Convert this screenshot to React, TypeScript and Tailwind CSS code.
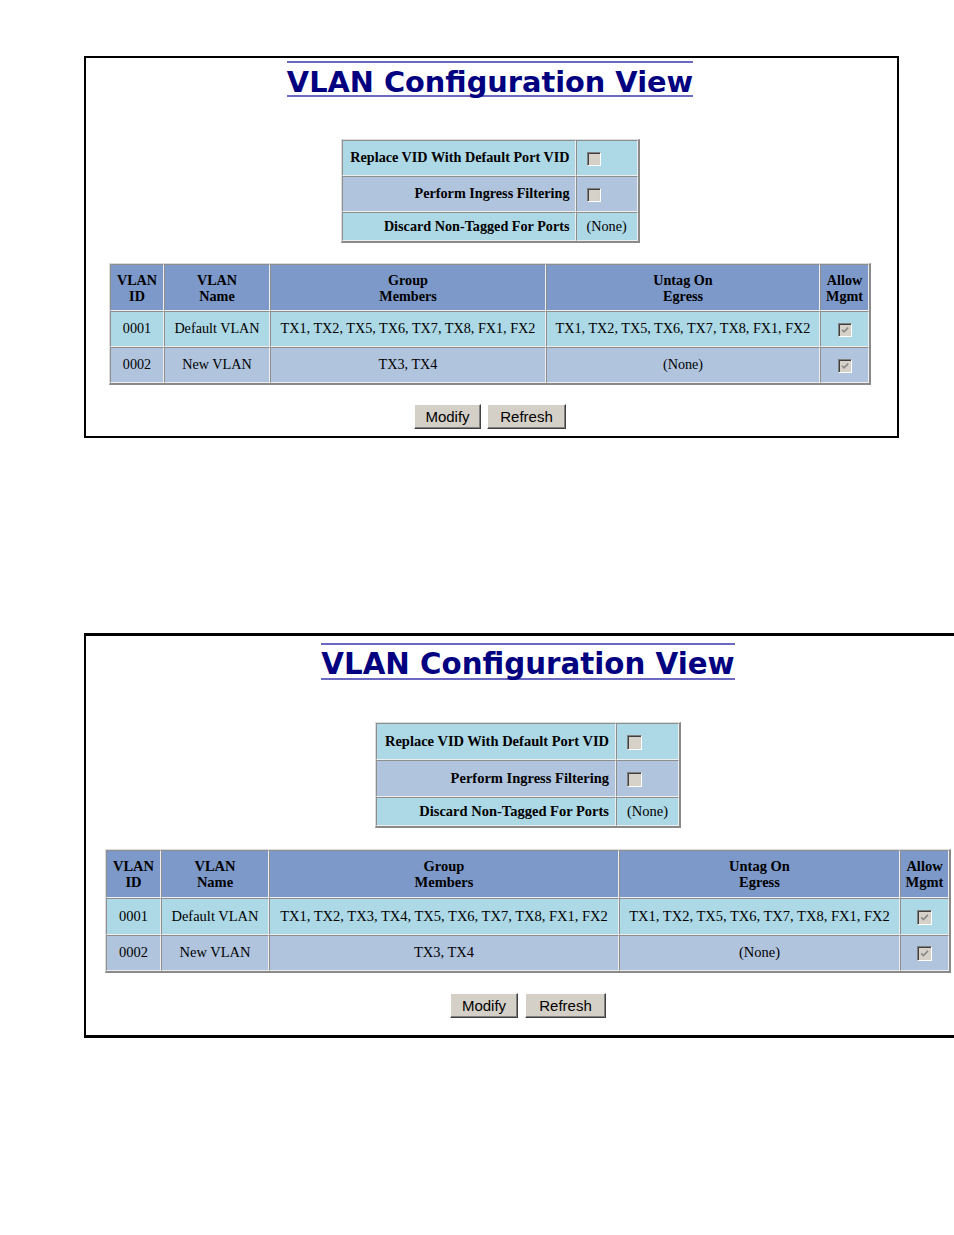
import React from 'react';

type Variant = {
  panel: string;
  title: string;
  text: string;
  settings: string;
  labelCol: string;
  labelPad: string;
  valuePad: string;
  sRows: [string, string, string];
  main: string;
  cols: [string, string, string, string];
  mRows: [string, string, string];
  buttons: string;
  modify: string;
  refresh: string;
  box: string;
  group: string;
};

const first: Variant = {
  panel: 'ml-[84px] mt-[56px] w-[815px] border-2 border-black pt-[3px] pb-[7px] pr-[3px]',
  title: 'border-y-2 pt-[6px] leading-[26px] text-[28.8px]',
  text: 'text-[14.2px]',
  settings: 'mt-[42px] w-[299px]',
  labelCol: 'w-[234px]',
  labelPad: 'pr-[5px]',
  valuePad: 'pl-[10px]',
  sRows: ['h-[36px]', 'h-[36px]', 'h-[29px]'],
  main: 'mt-[20px] w-[762px]',
  cols: ['w-[54px]', 'w-[106px]', 'w-[276px]', 'w-[274px]'],
  mRows: ['h-[47px]', 'h-[36px]', 'h-[36px]'],
  buttons: 'mt-[19px] gap-[6px]',
  modify: 'w-[67px]',
  refresh: 'w-[79px]',
  box: 'w-[14px] h-[14px]',
  group: 'TX1, TX2, TX5, TX6, TX7, TX8, FX1, FX2',
};

const second: Variant = {
  panel: 'ml-[84px] mt-[195px] w-[888px] border-x-2 border-y-[3px] border-black pt-[7px] pb-[17px]',
  title: 'border-y-2 pt-[6px] leading-[27px] text-[29.3px]',
  text: 'text-[14.5px]',
  settings: 'mt-[42px] w-[306px]',
  labelCol: 'w-[240px]',
  labelPad: 'pr-[6px]',
  valuePad: 'pl-[10px]',
  sRows: ['h-[37px]', 'h-[37px]', 'h-[29px]'],
  main: 'mt-[21px] w-[846px]',
  cols: ['w-[55px]', 'w-[108px]', 'w-[350px]', 'w-[281px]'],
  mRows: ['h-[48px]', 'h-[37px]', 'h-[36px]'],
  buttons: 'mt-[20px] gap-[7px]',
  modify: 'w-[68px]',
  refresh: 'w-[81px]',
  box: 'w-[15px] h-[15px]',
  group: 'TX1, TX2, TX3, TX4, TX5, TX6, TX7, TX8, FX1, FX2',
};

const cell =
  'border border-t-[#8e8e8e] border-l-[#8e8e8e] border-b-[#eeeeee] border-r-[#eeeeee] p-0 align-middle';
const outer =
  'border-separate border-spacing-0 table-fixed border-t border-l border-r-2 border-b-2 border-t-[#dcdcdc] border-l-[#dcdcdc] border-r-[#8a8a8a] border-b-[#8a8a8a]';

function Box({ checked, size }: { checked?: boolean; size: string }) {
  return (
    <span
      className={`inline-block align-middle relative ${size} bg-[#d6d2ca] border border-t-[#808080] border-l-[#808080] border-b-white border-r-white shadow-[inset_1px_1px_0_#404040,inset_-1px_-1px_0_#d4d0c8]`}
    >
      {checked && (
        <svg viewBox="0 0 12 12" className="absolute inset-0 w-full h-full">
          <path d="M3 5.8 L5 7.9 L9.2 3.6" fill="none" stroke="#8a8a8a" strokeWidth="1.6" />
        </svg>
      )}
    </span>
  );
}

function Panel({ v }: { v: Variant }) {
  const btn =
    "h-[25px] bg-[#d4d0c8] border border-t-white border-l-white border-r-[#404040] border-b-[#404040] shadow-[inset_-1px_-1px_0_#808080] text-[15px] text-black font-['Liberation_Sans',Arial,sans-serif] leading-none";
  return (
    <div className={`${v.panel} flex flex-col items-center bg-white`}>
      <h1
        className={`inline-block ${v.title} border-[#6a6ac2] font-bold text-[#000080] font-['DejaVu_Sans',Verdana,sans-serif] whitespace-nowrap`}
      >
        VLAN Configuration View
      </h1>

      <div className={`font-['Liberation_Serif','Times_New_Roman',serif] text-black ${v.text} flex flex-col items-center`}>
        {/* Port settings */}
        <table className={`${outer} ${v.settings}`}>
          <tbody>
            <tr className="bg-[#add8e6]">
              <td className={`${cell} ${v.labelCol} ${v.sRows[0]} ${v.labelPad} text-right font-bold whitespace-nowrap`}>
                Replace VID With Default Port VID
              </td>
              <td className={`${cell} ${v.valuePad} text-left`}>
                <Box size={v.box} />
              </td>
            </tr>
            <tr className="bg-[#b0c4de]">
              <td className={`${cell} ${v.sRows[1]} ${v.labelPad} text-right font-bold whitespace-nowrap`}>
                Perform Ingress Filtering
              </td>
              <td className={`${cell} ${v.valuePad} text-left`}>
                <Box size={v.box} />
              </td>
            </tr>
            <tr className="bg-[#add8e6]">
              <td className={`${cell} ${v.sRows[2]} ${v.labelPad} text-right font-bold whitespace-nowrap`}>
                Discard Non-Tagged For Ports
              </td>
              <td className={`${cell} ${v.valuePad} text-left whitespace-nowrap`}>(None)</td>
            </tr>
          </tbody>
        </table>

        {/* VLAN list */}
        <table className={`${outer} ${v.main}`}>
          <tbody>
            <tr className="bg-[#7d99ca] font-bold leading-[16px] text-center">
              <th className={`${cell} ${v.cols[0]} ${v.mRows[0]}`}>VLAN<br />ID</th>
              <th className={`${cell} ${v.cols[1]}`}>VLAN<br />Name</th>
              <th className={`${cell} ${v.cols[2]}`}>Group<br />Members</th>
              <th className={`${cell} ${v.cols[3]}`}>Untag On<br />Egress</th>
              <th className={cell}>Allow<br />Mgmt</th>
            </tr>
            <tr className="bg-[#add8e6] text-center whitespace-nowrap">
              <td className={`${cell} ${v.mRows[1]}`}>0001</td>
              <td className={cell}>Default VLAN</td>
              <td className={cell}>{v.group}</td>
              <td className={cell}>TX1, TX2, TX5, TX6, TX7, TX8, FX1, FX2</td>
              <td className={cell}>
                <Box checked size={v.box} />
              </td>
            </tr>
            <tr className="bg-[#b0c4de] text-center whitespace-nowrap">
              <td className={`${cell} ${v.mRows[2]}`}>0002</td>
              <td className={cell}>New VLAN</td>
              <td className={cell}>TX3, TX4</td>
              <td className={cell}>(None)</td>
              <td className={cell}>
                <Box checked size={v.box} />
              </td>
            </tr>
          </tbody>
        </table>
      </div>

      <div className={`flex ${v.buttons}`}>
        <button className={`${btn} ${v.modify}`}>Modify</button>
        <button className={`${btn} ${v.refresh}`}>Refresh</button>
      </div>
    </div>
  );
}

export default function App() {
  return (
    <div className="w-[954px] h-[1235px] overflow-hidden bg-white">
      <Panel v={first} />
      <Panel v={second} />
    </div>
  );
}
